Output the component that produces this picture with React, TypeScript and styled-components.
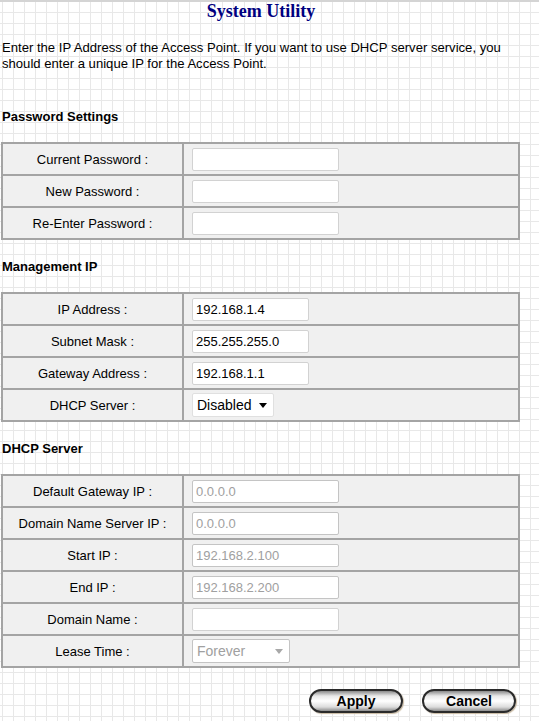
import React from 'react'
import styled, { createGlobalStyle } from 'styled-components'

const GlobalStyle = createGlobalStyle`
	html, body {
		margin: 0;
		padding: 0;
	}
	body {
		font-family: "Liberation Sans", Arial, sans-serif;
		font-size: 13px;
		color: #000;
		background-color: #fff;
		background-image:
			linear-gradient(to right, #e8e8e8 1px, transparent 1px),
			linear-gradient(to bottom, #e8e8e8 1px, transparent 1px);
		background-size: 11px 11px;
		background-position: 2px 1px;
		border-top: 2px solid #d4d4d4;
		min-height: 719px;
	}
`

const Page = styled.div`
	width: 520px;
	padding: 0 0 0 1px;
`

const Title = styled.h1`
	margin: 0;
	text-align: center;
	font-family: "Liberation Serif", "Times New Roman", serif;
	font-size: 18px;
	font-weight: bold;
	color: #000080;
	line-height: 18px;
`

const Intro = styled.p`
	margin: 20px 0 0 1px;
	line-height: 16px;
	font-size: 13.1px;
`

const SectionTitle = styled.h2<{ $top: number }>`
	margin: ${p => p.$top}px 0 0 1px;
	font-size: 13px;
	font-weight: bold;
	line-height: 16px;
`

const Table = styled.table<{ $top: number }>`
	margin-top: ${p => p.$top}px;
	width: 519px;
	border-collapse: collapse;
	background: #f0f0f0;
	border: 2px solid #a4a4a4;
`

const Row = styled.tr`
	height: 32px;
`

const Label = styled.td`
	width: 179px;
	text-align: center;
	border: 2px solid #a4a4a4;
	padding: 0;
	font-size: 13px;
`

const Field = styled.td`
	border: 2px solid #a4a4a4;
	padding: 0 0 0 8px;
`

const TextInput = styled.input<{ $w: number }>`
	box-sizing: border-box;
	width: ${p => p.$w}px;
	height: 23px;
	margin: 0;
	padding: 0 3px;
	border: 1px solid #d2d2d2;
	border-radius: 2px;
	background: #fff;
	font-family: "Liberation Sans", Arial, sans-serif;
	font-size: 13px;
	color: #000;
	outline: none;

	&:disabled {
		color: #a0a0a0;
		background: #fff;
		border-color: #c4c4c4;
	}
`

const SelectBox = styled.div<{ $w: number; $disabled?: boolean }>`
	box-sizing: border-box;
	width: ${p => p.$w}px;
	height: 24px;
	display: flex;
	align-items: center;
	justify-content: space-between;
	padding: 0 6px 0 4px;
	border: 1px solid ${p => (p.$disabled ? '#c4c4c4' : '#e0e0e0')};
	border-radius: 2px;
	background: #fff;
	font-size: 14px;
	color: ${p => (p.$disabled ? '#a0a0a0' : '#000')};
`

const Caret = styled.span<{ $disabled?: boolean }>`
	width: 0;
	height: 0;
	border-left: 4px solid transparent;
	border-right: 4px solid transparent;
	border-top: 5px solid ${p => (p.$disabled ? '#a8a8a8' : '#000')};
`

const Buttons = styled.div`
	display: flex;
	justify-content: flex-end;
	gap: 19px;
	margin-top: 21px;
	padding-right: 5px;
`

const PillButton = styled.button`
	width: 94px;
	height: 24px;
	border-radius: 12px;
	border: 2px solid #2a2a2a;
	background: linear-gradient(to bottom, #8a8a8a 0%, #e8e8e8 25%, #ffffff 50%, #dcdcdc 80%, #8c8c8c 100%);
	box-shadow: 1px 1px 1px #c8b8a0;
	font-family: "Liberation Sans", Arial, sans-serif;
	font-size: 14px;
	font-weight: bold;
	color: #000;
	padding: 0;
	cursor: pointer;
`

interface FieldRow {
	label: string
	kind: 'text' | 'select'
	value?: string
	width: number
	disabled?: boolean
}

const passwordRows: FieldRow[] = [
	{ label: 'Current Password :', kind: 'text', width: 147 },
	{ label: 'New Password :', kind: 'text', width: 147 },
	{ label: 'Re-Enter Password :', kind: 'text', width: 147 },
]

const managementRows: FieldRow[] = [
	{ label: 'IP Address :', kind: 'text', value: '192.168.1.4', width: 117 },
	{ label: 'Subnet Mask :', kind: 'text', value: '255.255.255.0', width: 117 },
	{ label: 'Gateway Address :', kind: 'text', value: '192.168.1.1', width: 117 },
	{ label: 'DHCP Server :', kind: 'select', value: 'Disabled', width: 82 },
]

const dhcpRows: FieldRow[] = [
	{ label: 'Default Gateway IP :', kind: 'text', value: '0.0.0.0', width: 147, disabled: true },
	{ label: 'Domain Name Server IP :', kind: 'text', value: '0.0.0.0', width: 147, disabled: true },
	{ label: 'Start IP :', kind: 'text', value: '192.168.2.100', width: 147, disabled: true },
	{ label: 'End IP :', kind: 'text', value: '192.168.2.200', width: 147, disabled: true },
	{ label: 'Domain Name :', kind: 'text', width: 147 },
	{ label: 'Lease Time :', kind: 'select', value: 'Forever', width: 98, disabled: true },
]

function SettingsTable({ rows, top }: { rows: FieldRow[]; top: number }) {
	return (
		<Table $top={top}>
			<tbody>
				{rows.map(r => (
					<Row key={r.label}>
						<Label>{r.label}</Label>
						<Field>
							{r.kind === 'text' ? (
								<TextInput
									$w={r.width}
									type={r.label.includes('Password') ? 'password' : 'text'}
									defaultValue={r.value ?? ''}
									disabled={r.disabled}
								/>
							) : (
								<SelectBox $w={r.width} $disabled={r.disabled}>
									<span>{r.value}</span>
									<Caret $disabled={r.disabled} />
								</SelectBox>
							)}
						</Field>
					</Row>
				))}
			</tbody>
		</Table>
	)
}

export default function App() {
	return (
		<>
			<GlobalStyle />
			<Page>
				<Title>System Utility</Title>
				<Intro>
					Enter the IP Address of the Access Point. If you want to use DHCP server service, you
					should enter a unique IP for the Access Point.
				</Intro>
				<SectionTitle $top={37}>Password Settings</SectionTitle>
				<SettingsTable rows={passwordRows} top={17} />
				<SectionTitle $top={19}>Management IP</SectionTitle>
				<SettingsTable rows={managementRows} top={17} />
				<SectionTitle $top={19}>DHCP Server</SectionTitle>
				<SettingsTable rows={dhcpRows} top={17} />
				<Buttons>
					<PillButton>Apply</PillButton>
					<PillButton>Cancel</PillButton>
				</Buttons>
			</Page>
		</>
	)
}
